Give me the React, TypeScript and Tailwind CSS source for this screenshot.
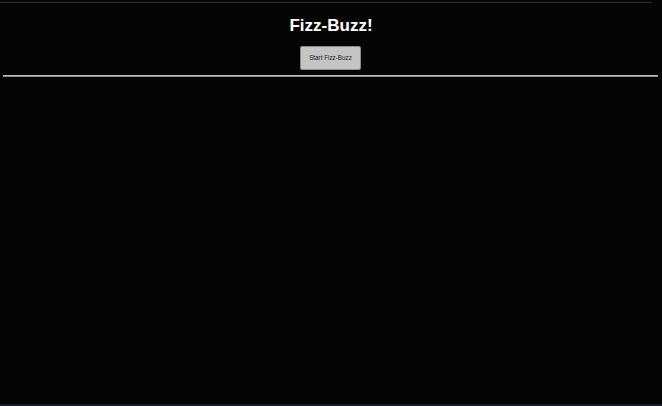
export default function App() {
  return (
    <div className="h-[406px] w-[662px] overflow-hidden bg-[#050505] flex flex-col font-['Liberation_Sans',Arial,sans-serif]">
      <div className="mt-[2px] h-px w-[652px] bg-[#2e2e2e]" />
      <div className="flex flex-1">
        <div className="flex flex-1 flex-col">
          <h1 className="mt-[12px] text-center text-[17px] font-bold leading-[22px] text-white">Fizz-Buzz!</h1>
          <div className="mt-[9px] flex justify-center">
            <button
              type="button"
              className="ml-[-1px] h-[24px] w-[61px] rounded-[2px] border border-[#8a8a8a] bg-[#c4c4c4] text-[6.3px] text-[#222]"
            >
              Start Fizz-Buzz
            </button>
          </div>
          <div className="ml-[3px] mt-[5px] flex w-[655px] flex-col">
            <div className="h-px bg-[#bdbdbd]" />
            <div className="h-px bg-[#8c8c8c]" />
          </div>
          <div className="flex-1" />
          <div className="h-[2px] bg-[#0e1e2c]" />
        </div>
      </div>
    </div>
  );
}
